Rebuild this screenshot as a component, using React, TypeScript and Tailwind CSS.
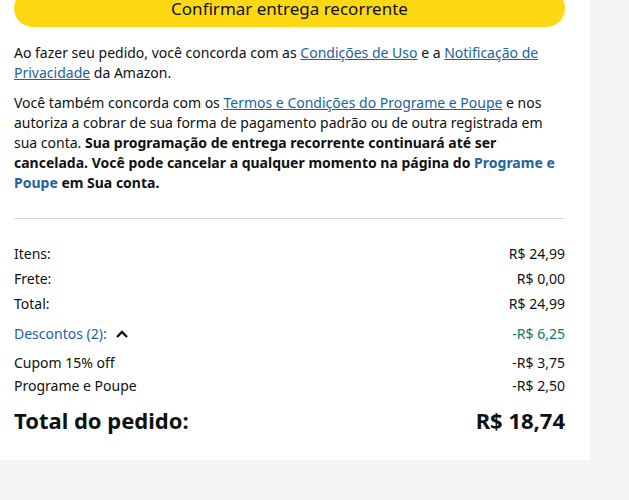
import React from 'react';

const rows = [
  { label: 'Itens:', value: 'R$ 24,99' },
  { label: 'Frete:', value: 'R$ 0,00' },
  { label: 'Total:', value: 'R$ 24,99' },
];

export default function App() {
  return (
    <div
      className="min-h-[500px] w-[629px] overflow-hidden bg-[#f5f5f5] text-[#0f1111]"
      style={{ fontFamily: '"Noto Sans", "Open Sans", sans-serif' }}
    >
      <div className="w-[590px] h-[470px] bg-white pl-[14px] pr-[25px]">
        {/* Confirm button */}
        <button className="-mt-[10px] block w-full h-[37px] rounded-full bg-[#ffd814] text-[17px] leading-[36px] text-[#0f1111] text-center">
          Confirmar entrega recorrente
        </button>

        {/* Legal text */}
        <p className="mt-[16px] text-[14px] leading-[20px]">
          Ao fazer seu pedido, você concorda com as{' '}
          <a className="text-[#2162a1] underline">Condições de Uso</a> e a{' '}
          <a className="text-[#2162a1] underline">Notificação de Privacidade</a> da Amazon.
        </p>
        <p className="mt-[10px] text-[14px] leading-[20px]">
          Você também concorda com os{' '}
          <a className="text-[#2162a1] underline">Termos e Condições do Programe e Poupe</a> e nos
          autoriza a cobrar de sua forma de pagamento padrão ou de outra registrada em sua conta.{' '}
          <b>
            Sua programação de entrega recorrente continuará até ser cancelada. Você pode cancelar
            a qualquer momento na página do <span className="text-[#2162a1]">Programe e Poupe</span>{' '}
            em Sua conta.
          </b>
        </p>

        <div className="mt-[25px] border-t border-[#d5d9d9]" />

        {/* Summary */}
        <div className="mt-[25px] text-[14px] leading-[20px]">
          {rows.map((r) => (
            <div key={r.label} className="flex justify-between mb-[5px]">
              <span>{r.label}</span>
              <span>{r.value}</span>
            </div>
          ))}
          <div className="flex justify-between mt-[10px] mb-[9px]">
            <span className="flex items-center gap-2 text-[#2162a1]">
              Descontos (2):
              <svg width="14" height="10" viewBox="0 0 14 10" className="text-[#0f1111]">
                <path d="M2 8 L7 3 L12 8" fill="none" stroke="currentColor" strokeWidth="2.4" />
              </svg>
            </span>
            <span className="text-[#067d62]">-R$ 6,25</span>
          </div>
          <div className="flex justify-between mb-[3px]">
            <span>Cupom 15% off</span>
            <span>-R$ 3,75</span>
          </div>
          <div className="flex justify-between">
            <span>Programe e Poupe</span>
            <span>-R$ 2,50</span>
          </div>
          <div className="flex justify-between mt-[10px] text-[22px] leading-[28px] font-bold">
            <span>Total do pedido:</span>
            <span>R$ 18,74</span>
          </div>
        </div>
      </div>
    </div>
  );
}
